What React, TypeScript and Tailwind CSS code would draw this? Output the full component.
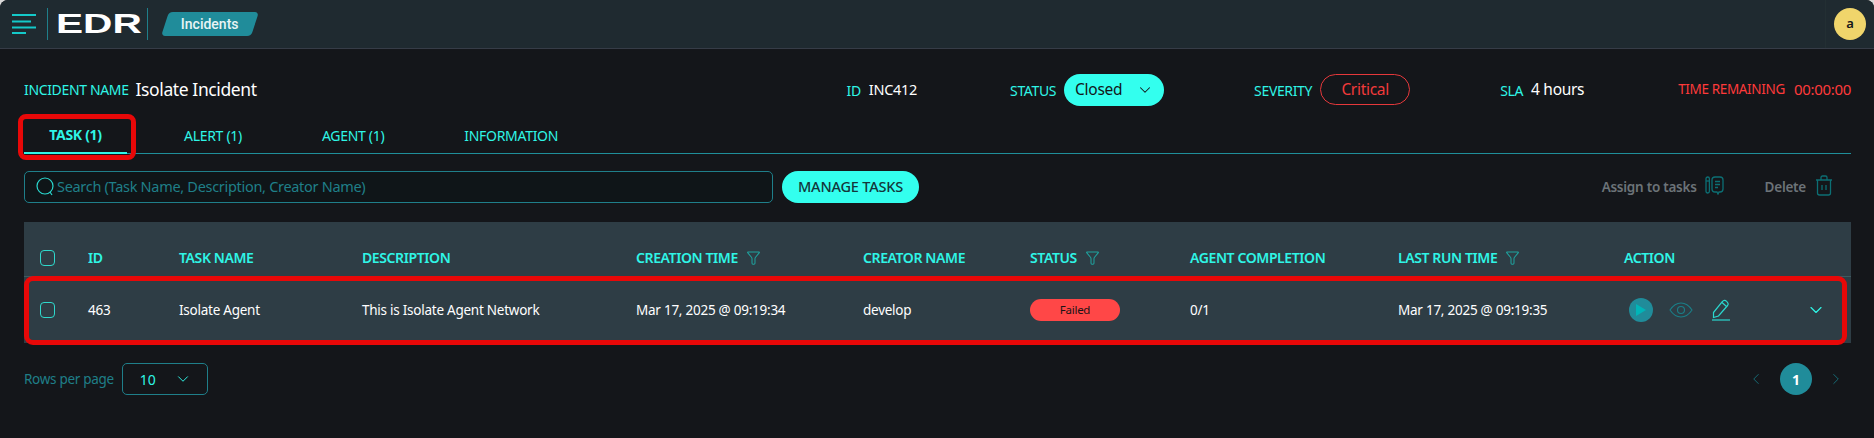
import React from 'react';
import { ChevronDown, ChevronLeft, ChevronRight } from 'lucide-react';

const COLS = 'grid grid-cols-[64px_91px_183px_274px_227px_167px_160px_208px_226px_1fr] items-center';

function Funnel() {
  return (
    <svg width="13" height="16" viewBox="0 0 14 16" fill="none" stroke="#1fa39f" strokeWidth="1.1" className="ml-[9px]">
      <path d="M1 1.500h12c.4 0 .5.4.3.7L9 7.500c-.3.4-.4.7-.4 1.200v5c0 .7-.5 1-1.100 1H6.400c-.6 0-1-.3-1-1v-5c0-.5-.1-.8-.4-1.200L.7 2.200C.5 1.900.6 1.500 1 1.500z" />
    </svg>
  );
}

function Checkbox() {
  return <span className="block h-[16px] w-[15px] rounded-[4px] border border-[#2fd9cc]" />;
}

function Label({ children }: { children: React.ReactNode }) {
  return <span className="text-[14px] tracking-[-0.35px] text-[#2ff5e6]">{children}</span>;
}

function Th({ children, filter }: { children: React.ReactNode; filter?: boolean }) {
  return (
    <div className="flex items-center text-[14px] font-semibold tracking-[-0.4px] text-[#2ff5e6]">
      {children}
      {filter && <Funnel />}
    </div>
  );
}

export default function App() {
  return (
    <div className="h-[438px] w-full bg-[#d9d9d9] font-['Noto_Sans',sans-serif]">
      <div className="relative flex h-full flex-col overflow-hidden rounded-t-[8px] bg-[#14161a]">
        {/* top bar */}
        <header className="flex h-[49px] shrink-0 items-center border-b border-[#363c47] bg-[#1f2a30] pl-[12px]">
          <svg width="24" height="20" viewBox="0 0 24 20" fill="none" stroke="#14c9c9" strokeWidth="2">
            <path d="M0 1h24M0 7.500h19M0 13.500h24M0 19h14" />
          </svg>
          <span className="ml-[11px] h-[32px] w-px bg-[#1f7f8a]" />
          <span className="ml-[8px] w-[83px] origin-left scale-x-[1.45] font-['Liberation_Sans',sans-serif] text-[28px] leading-none font-bold text-white">
            EDR
          </span>
          <span className="ml-[8px] h-[32px] w-px bg-[#1f7f8a]" />
          <span className="ml-[17px] flex h-[24px] w-[90px] -skew-x-[18deg] items-center justify-center rounded-[4px] bg-[#208c9a]">
            <span className="skew-x-[18deg] font-['Roboto',sans-serif] text-[14px] font-medium text-[#e8f4f5]">Incidents</span>
          </span>
          <span className="ml-auto h-[48px] w-px bg-[#232f33]" />
          <span className="mr-[8px] ml-[8px] grid size-[32px] place-items-center rounded-full bg-[#f0d56b] text-[13px] font-semibold text-[#14161a]">
            a
          </span>
        </header>

        <main className="flex flex-1 flex-col pr-[23px] pl-[24px]">
          {/* incident summary */}
          <div className="mt-[25px] flex h-[31px] items-center whitespace-nowrap">
            <Label>INCIDENT NAME</Label>
            <span className="ml-[7px] text-[17.5px] tracking-[-0.4px] text-white">Isolate Incident</span>
            <span className="ml-[590px]"><Label>ID</Label></span>
            <span className="ml-[8px] text-[14.5px] tracking-[-0.3px] text-white">INC412</span>
            <span className="ml-[93px]"><Label>STATUS</Label></span>
            <span className="ml-[8px] flex h-[32px] w-[100px] items-center justify-between rounded-full bg-[#33ffee] pr-[10px] pl-[11px] text-[15.5px] tracking-[-0.3px] text-[#14161a]">
              Closed
              <ChevronDown size={18} strokeWidth={1.4} />
            </span>
            <span className="ml-[90px]"><Label>SEVERITY</Label></span>
            <span className="ml-[8px] flex h-[31px] w-[90px] items-center justify-center rounded-full border border-[#e5383b] text-[15.5px] tracking-[-0.3px] text-[#f23a3a]">
              Critical
            </span>
            <span className="ml-[90px]"><Label>SLA</Label></span>
            <span className="ml-[8px] text-[15.5px] tracking-[-0.3px] text-white">4 hours</span>
            <span className="ml-auto text-[13.5px] tracking-[-0.35px] text-[#ff3a3a]">TIME REMAINING</span>
            <span className="ml-[9px] text-[15px] tracking-[-0.3px] text-[#ff3a3a]">00:00:00</span>
          </div>

          {/* tabs */}
          <nav className="mt-[14px] flex h-[35px] items-stretch border-b border-[#1f8f9a] text-[14px] tracking-[-0.3px] text-[#2ff5e6]">
            <span className="-mb-px flex w-[103px] items-center justify-center border-b-2 border-[#2ff5e6] pb-[2px] font-bold">TASK (1)</span>
            <span className="ml-[57px] flex items-center pb-[2px]">ALERT (1)</span>
            <span className="ml-[80px] flex items-center pb-[2px]">AGENT (1)</span>
            <span className="ml-[80px] flex items-center pb-[2px]">INFORMATION</span>
          </nav>

          {/* search and bulk actions */}
          <div className="mt-[17px] flex h-[32px] items-center">
            <label className="flex h-full w-[749px] items-center rounded-[5px] border border-[#1f7f8a] bg-[#0f1518] pl-[11px]">
              <svg width="18" height="20" viewBox="0 0 18 20" fill="none" stroke="#2ad8cf" strokeWidth="1.2">
                <circle cx="9" cy="9" r="8" />
                <path d="M14 15l2 3" />
              </svg>
              <span className="ml-[3px] text-[14.5px] tracking-[-0.3px] text-[#1f7f88]">Search (Task Name, Description, Creator Name)</span>
            </label>
            <button className="ml-[9px] h-full w-[137px] rounded-full bg-[#33ffee] text-[14.5px] font-medium tracking-[-0.2px] text-[#14363a]">
              MANAGE TASKS
            </button>
            <span className="ml-auto text-[13.5px] font-semibold tracking-[-0.25px] text-[#6c7378]">Assign to tasks</span>
            <svg width="19" height="19" viewBox="0 0 19 19" fill="none" stroke="#0c6f74" strokeWidth="1.3" className="mb-[3px] ml-[8px]">
              <rect x="1" y="1" width="3.400" height="16" rx="1.700" />
              <path d="M1 5h3.400" />
              <path d="M7 4a3 3 0 0 1 3-3h5a3 3 0 0 1 3 3v9a3 3 0 0 1-3 3h-1l-1 2-1-2h-2a3 3 0 0 1-3-3z" />
              <path d="M10 5.500h5M10 8.500h5M10 11.500h3" />
            </svg>
            <span className="ml-[41px] text-[13.5px] font-semibold tracking-[-0.25px] text-[#6c7378]">Delete</span>
            <svg width="18" height="21" viewBox="0 0 18 21" fill="none" stroke="#0c6f74" strokeWidth="1.3" className="mr-[18px] mb-[3px] ml-[9px]">
              <path d="M1 5h16M6 5V2.500A1.500 1.500 0 0 1 7.500 1h3A1.500 1.500 0 0 1 12 2.500V5" />
              <path d="M2.500 5v13a2 2 0 0 0 2 2h9a2 2 0 0 0 2-2V5" />
              <path d="M7 10v5M11 10v5" />
            </svg>
          </div>

          {/* task table */}
          <div className="mt-[19px] bg-[#2e3d45]">
            <div className={`${COLS} h-[54px] pt-[17px]`}>
              <div className="pl-[16px]"><Checkbox /></div>
              <Th>ID</Th>
              <Th>TASK NAME</Th>
              <Th>DESCRIPTION</Th>
              <Th filter>CREATION TIME</Th>
              <Th>CREATOR NAME</Th>
              <Th filter>STATUS</Th>
              <Th>AGENT COMPLETION</Th>
              <Th filter>LAST RUN TIME</Th>
              <Th>ACTION</Th>
            </div>
            <div className={`${COLS} h-[67px] border-t border-[#3d5a60] text-[13.5px] tracking-[-0.25px] text-white`}>
              <div className="pl-[16px]"><Checkbox /></div>
              <div>463</div>
              <div>Isolate Agent</div>
              <div>This is Isolate Agent Network</div>
              <div>Mar 17, 2025 @ 09:19:34</div>
              <div>develop</div>
              <div>
                <span className="flex h-[22px] w-[90px] items-center justify-center rounded-full bg-[#ff4747] text-[11.5px] text-[#1a1416]">Failed</span>
              </div>
              <div>0/1</div>
              <div>Mar 17, 2025 @ 09:19:35</div>
              <div className="flex items-center pr-[25px] pl-[5px]">
                <span className="grid size-[24px] place-items-center rounded-full bg-[#208c9a]">
                  <svg width="10" height="12" viewBox="0 0 10 12" fill="#00b5b8"><path d="M0 0l10 6-10 6z" /></svg>
                </span>
                <svg width="24" height="18" viewBox="0 0 24 18" fill="none" stroke="#1a7f88" strokeWidth="1.100" className="ml-[16px]">
                  <path d="M1 9c3-4.500 7-7 11-7s8 2.500 11 7c-3 4.500-7 7-11 7s-8-2.500-11-7z" />
                  <circle cx="12" cy="9" r="3.500" />
                </svg>
                <svg width="18" height="22" viewBox="0 0 18 22" fill="none" stroke="#2ad8cf" strokeWidth="1.200" className="ml-[19px]">
                  <path d="M1.500 13.500L10.500 2.500a2.500 2.500 0 0 1 4-.2l1 1a2.500 2.500 0 0 1 .1 3.200L6.500 17l-5 1.500z" />
                  <path d="M10 3.500l4.500 4" />
                  <path d="M0 21h18" />
                </svg>
                <ChevronDown size={20} strokeWidth={1.4} className="ml-auto text-[#2ff5e6]" />
              </div>
            </div>
          </div>

          {/* pagination */}
          <div className="mt-[20px] flex h-[32px] items-center">
            <span className="text-[13.5px] tracking-[-0.3px] text-[#1f7f88]">Rows per page</span>
            <span className="ml-[8px] flex h-full w-[86px] items-center justify-between rounded-[5px] border border-[#1f7f8a] pr-[15px] pl-[17px] text-[14px] text-[#2ff5e6]">
              10
              <ChevronDown size={18} strokeWidth={1.3} />
            </span>
            <ChevronLeft size={18} strokeWidth={1.3} className="ml-auto text-[#176b75]" />
            <span className="ml-[15px] grid size-[32px] place-items-center rounded-full bg-[#208c9a] text-[14px] font-bold text-white">1</span>
            <ChevronRight size={18} strokeWidth={1.3} className="mr-[6px] ml-[15px] text-[#176b75]" />
          </div>
        </main>

        {/* red callouts from the annotated screenshot */}
        <span className="absolute top-[114px] left-[18px] h-[46px] w-[118px] rounded-[8px] border-[5px] border-[#e80808]" />
        <span className="absolute top-[276px] left-[24px] h-[69px] w-[1823px] rounded-[9px] border-[5px] border-[#e80808]" />
      </div>
    </div>
  );
}
